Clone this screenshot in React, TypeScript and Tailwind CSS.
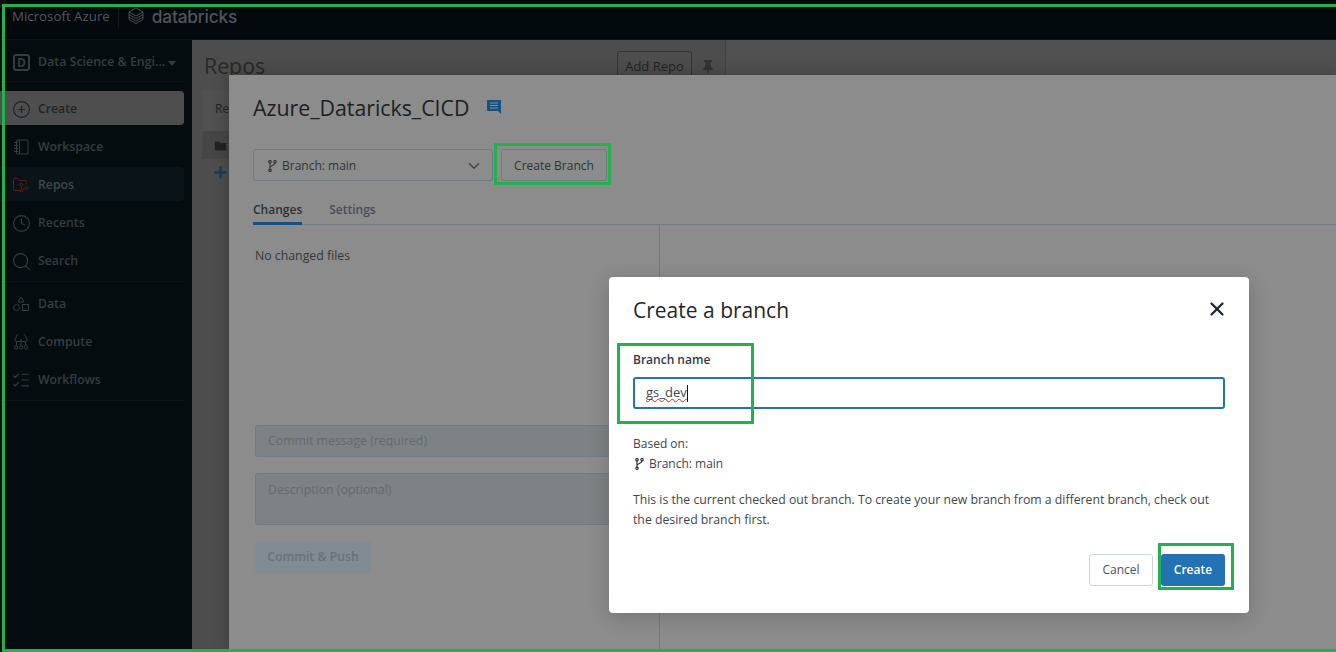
import { ChevronDown, CirclePlus, Clock, ListChecks, Plus, Search, X } from "lucide-react";
import type { ReactNode } from "react";

const Svg = ({ children, className }: { children: ReactNode; className?: string }) => (
  <svg viewBox="0 0 16 16" fill="none" stroke="currentColor" strokeWidth="1" className={className}>
    {children}
  </svg>
);

const BranchIcon = ({ className }: { className?: string }) => (
  <svg viewBox="0 0 9 12" fill="none" stroke="currentColor" strokeWidth="1.1" className={className}>
    <circle cx="2" cy="1.7" r="1.2" />
    <circle cx="2" cy="10.3" r="1.2" />
    <circle cx="7" cy="1.7" r="1.2" />
    <path d="M2 3v6M7 3c0 2.5-5 2.5-5 4.5" />
  </svg>
);

const NotebookIcon = () => (
  <Svg className="size-4 shrink-0">
    <rect x="3.5" y="1" width="11.5" height="14" rx="0.5" />
    <path d="M6.5 1v14M1 3.5h4M1 6.5h4M1 9.5h4M1 12.5h4" />
  </Svg>
);

const RepoIcon = () => (
  <Svg className="size-4 shrink-0">
    <path d="M8 13.5H1.2a.7.7 0 0 1-.7-.7V2.2a.7.7 0 0 1 .7-.7h3.6L6.6 3.5h6a.7.7 0 0 1 .7.7V7" />
    <circle cx="8.3" cy="7.6" r="1.4" />
    <circle cx="8.3" cy="13.4" r="1.4" />
    <circle cx="13.6" cy="11" r="1.4" />
    <path d="M8.3 9v3M9.6 12.6l2.8-1.2" />
  </Svg>
);

const DataIcon = () => (
  <Svg className="size-4 shrink-0">
    <path d="M8 1 11 6H5Z" />
    <circle cx="3.5" cy="11.5" r="3" />
    <rect x="9.5" y="8.5" width="6" height="6" />
  </Svg>
);

const ComputeIcon = () => (
  <Svg className="size-4 shrink-0">
    <path d="M3.5 9V7.5a1.8 1.8 0 0 1-.5-3.5 5 5 0 0 1 10 0 1.8 1.8 0 0 1-.5 3.5H3.5M8 5v6M12.5 7.5V11" />
    <path d="M3.5 7.5V11" />
    <circle cx="3" cy="13.5" r="1.7" />
    <circle cx="8" cy="13.5" r="1.7" />
    <circle cx="13" cy="13.5" r="1.7" />
  </Svg>
);

const LayersLogo = () => (
  <svg viewBox="0 0 16 17" fill="none" stroke="currentColor" strokeWidth="0.9" className="h-[17px] w-4">
    <path d="M8 1 15 5 8 9 1 5Z" />
    <path d="M1 5v2.5l7 4 7-4V5" />
    <path d="M1 7.5V10l7 4 7-4V7.5" />
    <path d="M1 10v2.5l7 4 7-4V10" />
  </svg>
);

const NavItem = ({
  icon,
  label,
  className = "text-[#363c40]",
}: {
  icon: ReactNode;
  label: string;
  className?: string;
}) => (
  <div className={`flex h-[34px] w-[184px] items-center gap-[9px] rounded-r pl-[13px] pt-[2px] text-[12.25px] font-semibold ${className}`}>
    <span className="flex size-4 items-center justify-center">{icon}</span>
    {label}
  </div>
);

const Sidebar = () => (
  <aside className="flex w-[192px] shrink-0 flex-col bg-[#040c10]">
    <div className="flex h-[42px] w-[184px] items-center border-b border-[#0c1418] pl-[13px] pt-[4px] text-[12.4px] font-semibold text-[#363c40]">
      <span className="flex size-[17px] items-center justify-center rounded-[3px] border-2 border-[#363c40] text-xs font-bold">
        D
      </span>
      <span className="ml-2 whitespace-nowrap">Data Science &amp; Engi...</span>
      <span className="ml-[3px] mt-px size-0 border-x-4 border-t-[5px] border-x-transparent border-t-[#363c40]" />
    </div>

    <div className="mt-[9px] flex flex-col gap-1">
      <NavItem icon={<CirclePlus className="size-[19px] shrink-0" strokeWidth={1.5} />} label="Create" className="bg-[#4e4e4e] text-[#1f2429]" />
      <NavItem icon={<NotebookIcon />} label="Workspace" />
      <NavItem icon={<RepoIcon />} label="Repos" className="bg-[#0a1317] text-[#43484b] [&_svg]:text-[#5e1a14]" />
      <NavItem icon={<Clock className="size-[19px] shrink-0" strokeWidth={1.4} />} label="Recents" />
      <NavItem icon={<Search className="size-[21px] shrink-0" strokeWidth={1.3} />} label="Search" />
    </div>

    <div className="mt-1 w-[184px] border-b border-[#0c1418]" />
    <div className="mt-1 flex flex-col gap-1">
      <NavItem icon={<DataIcon />} label="Data" />
      <NavItem icon={<ComputeIcon />} label="Compute" />
      <NavItem icon={<ListChecks className="size-5 shrink-0" strokeWidth={1.3} />} label="Workflows" />
    </div>
    <div className="mt-1 w-[184px] border-b border-[#0c1418]" />
  </aside>
);

const RepoBrowser = () => (
  <main className="flex flex-1 bg-[#4d4d4d]">
    <div className="w-[533px] pl-3 pt-[11px]">
      <div className="flex h-[31px] items-center justify-between">
        <h1 className="pb-[2px] text-[21.3px] text-[#282828]">Repos</h1>
        <div className="flex items-center">
          <span className="flex h-[31px] w-[75px] items-center justify-center rounded-[3px] border border-[#333] text-[13px] text-[#222]">
            Add Repo
          </span>
          <svg viewBox="0 0 16 16" className="ml-2 mr-[9px] size-4 fill-[#333]">
            <path d="M4 1h8v1.5l-1.5.7L11 8l2 2v1H9l-1 5-1-5H3v-1l2-2 .5-4.8L4 2.5Z" />
          </svg>
        </div>
      </div>
      <div className="-ml-[2px] mt-2 h-[69px] w-7 bg-[#505050]">
        <p className="pl-[13px] pt-[11px] text-xs text-[#222]">Re</p>
        <div className="mt-[14px] flex h-7 items-center bg-[#464646] pl-3">
          <svg viewBox="0 0 16 16" className="size-[13px] fill-[#222]">
            <path d="M1 3h5l2 2h7v9H1Z" />
          </svg>
        </div>
      </div>
      <Plus className="ml-2 mt-[5px] size-[17px] text-[#123e5f]" strokeWidth={3.5} />
    </div>
    <div className="flex-1 border-l border-[#444] bg-[#505050]" />
  </main>
);

const Drawer = () => (
  <section className="absolute bottom-0 left-[229px] right-0 top-[75px] flex flex-col bg-[#8c8c8c] shadow-[0_0_14px_rgba(0,0,0,0.25)]">
    <div className="pl-6 pt-[18px]">
      <div className="flex h-[30px] items-center gap-[17px]">
        <h2 className="text-[21.3px] leading-[30px] text-[#1b2023]">Azure_Dataricks_CICD</h2>
        <svg viewBox="0 0 16 16" className="mb-[2px] size-4 fill-[#17517f]">
          <path d="M1 1h14v14l-3-3H1Z" />
          <path d="M4 4h8M4 6.5h8M4 9h8" stroke="#8c8c8c" />
        </svg>
      </div>
      <div className="mt-[26px] flex gap-2 text-xs text-[#303336]">
        <div className="flex h-8 w-60 items-center rounded-[3px] border border-[#6f7b85] pl-[14px] pr-[9px] pt-[2px]">
          <BranchIcon className="mr-[5px] h-3 w-[9px]" />
          <span className="flex-1">Branch: main</span>
          <ChevronDown className="size-[18px] text-[#3d464c]" strokeWidth={2} />
        </div>
        <div className="flex h-8 w-[106px] items-center justify-center rounded-[3px] border border-[#6f7b85] pt-[2px]">
          Create Branch
        </div>
      </div>
      <div className="mt-4 flex gap-[27px] border-b border-[#6f7b85] pb-px text-xs font-semibold leading-[26px]">
        <span className="-mb-[2px] h-7 border-b-[3px] border-[#17517f] text-[#2a3136]">Changes</span>
        <span className="text-[#434f59]">Settings</span>
      </div>
    </div>
    <div className="ml-6 flex flex-1">
      <div className="w-[407px] border-r border-[#6f7b85] pl-[2px] pr-3 pt-[22px] text-[12.3px]">
        <p className="leading-[18px] text-[#33383b]">No changed files</p>
        <div className="mt-40 flex h-8 items-center rounded-[3px] border border-[#6f7b85] bg-[#7c8285] pl-3 text-[#646b70]">
          Commit message (required)
        </div>
        <div className="mt-4 h-[52px] rounded-[3px] border border-[#6f7b85] bg-[#7c8285] pl-3 pt-[7px] text-[#646b70]">
          Description (optional)
        </div>
        <div className="mt-4 flex h-8 w-[116px] items-center justify-center rounded-[3px] bg-[#808b92] font-semibold text-[#687278]">
          Commit &amp; Push
        </div>
      </div>
    </div>
  </section>
);

const BranchDialog = () => (
  <div className="absolute left-[609px] top-[277px] flex h-[336px] w-[640px] flex-col rounded bg-white px-6 text-xs text-[#3f464b] shadow-[0_4px_20px_rgba(0,0,0,0.18)]">
    <div className="flex h-[66px] items-center justify-between">
      <h3 className="text-[21px] font-medium text-[#1f272d]">Create a branch</h3>
      <X className="-mr-[3px] mb-[2px] size-[22px] text-[#1f272d]" strokeWidth={2.5} />
    </div>
    <label className="mt-[7px] block font-semibold leading-5 text-[#343a3f]">Branch name</label>
    <div className="mt-[7px] flex h-8 items-center rounded-[3px] border-2 border-[#2272b4] pl-[11px] text-[13px] text-[#3f464b]">
      <span className="underline decoration-[#e02020] decoration-wavy decoration-1 [text-decoration-skip-ink:none]">gs_dev</span>
      <span className="h-[17px] w-px bg-[#111]" />
    </div>
    <p className="mt-[25px] leading-5">Based on:</p>
    <p className="flex items-center gap-[5px] leading-5">
      <BranchIcon className="ml-[2px] h-3 w-[9px] text-[#1f272d]" />
      Branch: main
    </p>
    <p className="mt-4 text-[12.25px] leading-5">
      This is the current checked out branch. To create your new branch from a different branch, check out
      the desired branch first.
    </p>
    <div className="mt-6 flex justify-end gap-2">
      <span className="flex h-8 w-16 items-center justify-center rounded-[3px] border border-[#cbd5df] text-[#4a5156]">
        Cancel
      </span>
      <span className="flex h-8 w-16 items-center justify-center rounded-[3px] bg-[#2272b4] font-semibold text-white">
        Create
      </span>
    </div>
  </div>
);

export default function App() {
  return (
    <div className="relative flex h-[652px] w-[1336px] flex-col overflow-hidden font-['Open_Sans',sans-serif]">
      {/* Top bar */}
      <header className="flex h-10 shrink-0 items-start border-b border-[#0c1418] bg-[#03090d] pl-3 pt-[7px] text-[#51565a]">
        <span className="text-[13.3px] leading-[19px]">Microsoft Azure</span>
        <span className="mx-2 h-[21px] w-px bg-[#12191d]" />
        <span className="ml-px"><LayersLogo /></span>
        <span className="ml-2 font-['Inter',sans-serif] text-[17.3px] font-medium leading-5 tracking-[-0.2px]">databricks</span>
      </header>

      <div className="flex flex-1">
        <Sidebar />
        <RepoBrowser />
      </div>

      <Drawer />
      <BranchDialog />

      {/* Annotation rectangles drawn over the screenshot */}
      <div className="pointer-events-none absolute -right-2 bottom-0 left-[2px] top-1 border-[3px] border-[#22b14c]" />
      <div className="pointer-events-none absolute left-[494px] top-[143px] h-[42px] w-[117px] border-[3px] border-[#22b14c]" />
      <div className="pointer-events-none absolute left-[617px] top-[343px] h-[81px] w-[137px] border-[3px] border-[#22b14c]" />
      <div className="pointer-events-none absolute left-[1158px] top-[543px] h-[47px] w-[76px] border-[3px] border-[#22b14c]" />
    </div>
  );
}
